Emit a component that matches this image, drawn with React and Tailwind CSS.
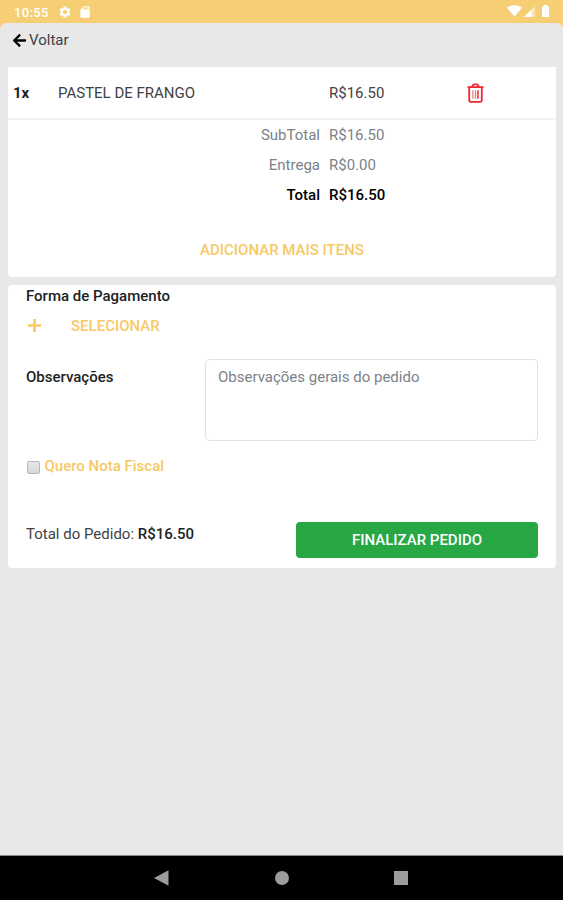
import { FaArrowLeft } from 'react-icons/fa'
import { MdSettings, MdSdCard } from 'react-icons/md'

const items = [{ id: 1, qty: 1, name: 'PASTEL DE FRANGO', price: 16.5 }]
const deliveryFee = 0

const money = value => `R$${value.toFixed(2)}`

function StatusBar() {
  return (
    <div className="h-[23px] bg-[#f6cf74] flex items-center pl-[14px] pr-[14px] text-white">
      <span className="text-[13px] leading-none font-medium tracking-[0.35px] pt-px w-[44px]">10:55</span>
      <MdSettings className="w-[14px] h-[14px]" />
      <MdSdCard className="w-[14px] h-[14px] ml-[6px]" />
      <div className="ml-auto flex items-center pb-px">
        <svg viewBox="0 0 15 12" className="w-[15px] h-[12px]" fill="currentColor">
          <path d="M0 2.8C4-.6 11-.6 15 2.8L7.5 11.8z" />
        </svg>
        <svg viewBox="0 0 11 11" className="w-[11px] h-[11px] ml-[2px]" fill="currentColor">
          <path d="M0 11 11 0v11z" opacity=".45" />
          <path d="M0 11 7.5 3.5V11z" />
        </svg>
        <svg viewBox="0 0 7 12" className="w-[7px] h-[12px] ml-[7px]" fill="currentColor">
          <path d="M2 0h3v1.2h1.2q.8 0 .8.8v9.2q0 .8-.8.8H.8Q0 12 0 11.2V2q0-.8.8-.8H2z" />
        </svg>
      </div>
    </div>
  )
}

function TrashIcon() {
  return (
    <svg viewBox="0 0 17 20" className="w-[17px] h-[20px] text-[#f02632]" fill="none" stroke="currentColor" strokeWidth="1.8">
      <path d="M.5 4.2h16M4.8 4 6.1 1.9Q6.5 1.3 7.2 1.3h2.6q.7 0 1.1.6L12.2 4M2.2 4.5v12.6q0 1.8 1.8 1.8h9q1.8 0 1.8-1.8V4.5" />
      <path d="M5.9 7.3v8.4M8.5 7.3v8.4" strokeWidth="1.2" opacity=".65" />
      <path d="M11 7.3v8.4" strokeWidth="1.5" />
    </svg>
  )
}

function SummaryRow({ label, value, className }) {
  return (
    <div className={`flex h-[30px] items-center ${className}`}>
      <span className="w-[312px] text-right">{label}</span>
      <span className="ml-[9px]">{money(value)}</span>
    </div>
  )
}

function NavBar() {
  return (
    <div className="h-[45px] bg-black border-t border-[#888] flex items-center pl-[154px] text-[#9c9c9c]">
      <svg viewBox="0 0 15 16" className="w-[15px] h-[16px]" fill="currentColor">
        <path d="M0 8 14.5 .3v15.4z" />
      </svg>
      <div className="w-[14px] h-[14px] rounded-full bg-[#9c9c9c] ml-[106px]" />
      <div className="w-[14px] h-[14px] bg-[#9c9c9c] ml-[105px]" />
    </div>
  )
}

export default function App() {
  const subtotal = items.reduce((sum, item) => sum + item.qty * item.price, 0)
  const total = subtotal + deliveryFee

  return (
    <div className="w-[563px] h-[900px] flex flex-col bg-[#f6cf74] font-[Roboto,sans-serif] text-[15px] leading-[22px] text-[#3f4245]">
      <StatusBar />
      <main className="flex-1 bg-[#e8e8e8] rounded-t-[6px] px-2 pr-[7px]">
        <button className="flex items-center h-[34px] mb-[10px] pl-[4px]">
          <FaArrowLeft className="w-[15px] h-[15px] text-black mr-[2px]" />
          Voltar
        </button>

        <section className="h-[210px] bg-white rounded-b-[4px]">
          {items.map(item => (
            <div key={item.id} className="flex items-center h-[53px] border-b-2 border-[#f3f3f3]">
              <span className="w-[50px] pl-[5px] font-bold text-[#202224]">{item.qty}x</span>
              <span className="w-[271px]">{item.name}</span>
              <span className="w-[138px]">{money(item.price)}</span>
              <button>
                <TrashIcon />
              </button>
            </div>
          ))}
          <SummaryRow label="SubTotal" value={subtotal} className="text-[#7b8289]" />
          <SummaryRow label="Entrega" value={deliveryFee} className="text-[#7b8289]" />
          <SummaryRow label="Total" value={total} className="font-medium text-black" />
          <button className="block mx-auto mt-[29px] font-medium text-[#f6c965]">ADICIONAR MAIS ITENS</button>
        </section>

        <section className="h-[283px] mt-2 bg-white rounded-[4px] px-[18px]">
          <h2 className="font-medium text-[#202224]">Forma de Pagamento</h2>
          <button className="flex items-center mt-[8px] font-medium text-[#f6c965]">
            <svg viewBox="0 0 13 13" className="w-[13px] h-[13px] ml-[2px] mr-[30px] mb-px" stroke="currentColor" strokeWidth="2.6">
              <path d="M6.5 0v13M0 6.5h13" />
            </svg>
            SELECIONAR
          </button>

          <div className="flex mt-[22px]">
            <label htmlFor="notes" className="w-[179px] pt-[7px] font-medium text-[#202224]">Observações</label>
            <textarea
              id="notes"
              placeholder="Observações gerais do pedido"
              className="block w-[333px] h-[82px] resize-none rounded-[4px] border border-[#dfe2e5] px-3 py-[6px] placeholder:text-[#7b8289]"
            />
          </div>

          <label className="flex items-center mt-[14px] font-medium text-[#f6c965]">
            <input
              type="checkbox"
              className="appearance-none w-[13px] h-[13px] ml-[1px] mr-[4.5px] mt-[2px] rounded-[2px] border border-[#b5b5b5] bg-linear-to-b from-[#e9e9e9] to-[#d6d6d6]"
            />
            Quero Nota Fiscal
          </label>

          <div className="flex mt-[45px]">
            <p className="w-[270px] pt-px">
              Total do Pedido: <span className="font-medium text-[#202224]">{money(total)}</span>
            </p>
            <button className="w-[242px] h-[36px] rounded-[4px] bg-[#28a745] text-white font-medium">FINALIZAR PEDIDO</button>
          </div>
        </section>
      </main>
      <NavBar />
    </div>
  )
}
